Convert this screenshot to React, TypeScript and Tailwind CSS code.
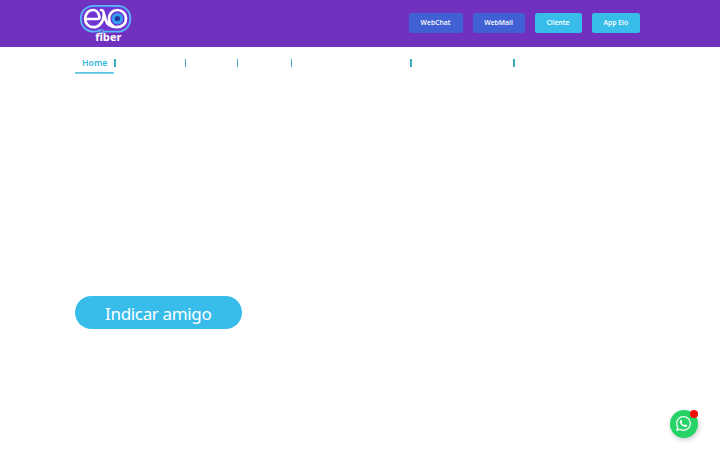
import React from "react";

const actions = [
  { label: "WebChat", style: "w-[54px] bg-[#4060d3]" },
  { label: "WebMail", style: "w-[52px] bg-[#4060d3]" },
  { label: "Cliente", style: "w-[47px] bg-[#38bdea]" },
  { label: "App Elo", style: "w-[48.5px] bg-[#38bdea]" },
];

const menuItems = ["w-[69.5px]", "w-[50.5px]", "w-[53px]", "w-[118px]", "w-[101.5px]"];

function Separator() {
  return <div className="mt-[6.5px] h-[8px] w-[1.3px] shrink-0 bg-[#3fa9c4]" />;
}

function Logo() {
  return (
    <svg className="h-[42px] w-[54px]" viewBox="79 3 54 42" fill="none" role="img">
      <g strokeLinecap="round" strokeLinejoin="round">
        <path
          d="M99.5 30.2C97.9 31.2 96 31.7 94 31.7C86.2 31.7 80.8 26.2 80.8 18.7C80.8 11.2 86.2 5.8 94 5.8H117.3C125 5.8 130.3 11.2 130.3 18.7C130.3 26.2 125 31.7 117.3 31.7H103.5"
          fill="#7035d1"
          stroke="#55b8fa"
          strokeWidth="1.8"
        />
        <path
          d="M86 19H97.5C99.3 19 99.8 17.7 99.3 16.1C98.3 12.2 96 10 93 10C88.3 10 85.2 13.8 85.2 18.8C85.2 23.7 88.8 27.2 93.5 27.2C99.5 27.2 103.8 21 103.8 14.7C103.8 11.6 102.8 10 101 10M101 10C104 10 104.3 15 105.5 19.4C107 25 111 27.2 117 27.2C122.3 27.2 126 23.6 126 18.7C126 13.6 122.3 10 117.3 10C112.5 10 109 13.8 109 18.6C109 22 111 25.2 114 26.6"
          stroke="white"
          strokeWidth="2.7"
        />
        <circle cx="117.4" cy="18.6" r="4.2" fill="#223c9a" stroke="#349cf2" strokeWidth="3" />
        <circle cx="101.5" cy="31.4" r="1.7" fill="#6930bf" stroke="#68cbff" strokeWidth="1.1" />
      </g>
      <text x="95.2" y="41.3" fill="white" fontFamily="Open Sans, sans-serif" fontSize="10.3" fontWeight="700" textLength="26.3" lengthAdjust="spacingAndGlyphs">fiber</text>
    </svg>
  );
}

export default function App() {
  return (
    <div className="h-[450px] w-[720px] overflow-hidden bg-white font-['Open_Sans',sans-serif]">
      <header className="flex h-[46.5px] items-start bg-[#6f31be] pt-[3px] pr-20 pl-[79px]">
        <a href="#" className="block"><Logo /></a>
        <div className="mt-[10.3px] ml-auto flex gap-[10px]">
          {actions.map(({ label, style }) => (
            <button key={label} className={`${style} h-[19.7px] rounded-[2.5px] text-[6.8px] leading-[20px] font-semibold text-white`}>
              <span className="block h-full">{label}</span>
            </button>
          ))}
        </div>
      </header>
      <nav className="flex h-7 pt-[5.5px] pl-[75px]">
        <div className="flex h-[22px] w-[39.3px] flex-col font-['Noto_Sans',sans-serif] text-[8.7px] leading-[22px] font-semibold text-[#36b7e0]">
          <span className="h-[20.2px] text-center">Home</span>
          <svg className="h-[2px] w-full" viewBox="0 0 39.3 2" preserveAspectRatio="none">
            <rect y="0.2" width="39.3" height="1.6" fill="#38b9dc" />
          </svg>
        </div>
        <Separator />
        {menuItems.map((width, index) => (
          <div key={index} className="flex">
            <div className={width} />
            <Separator />
          </div>
        ))}
      </nav>
      <main className="pt-[221.5px] pl-[75px]">
        <button className="h-[33px] w-[166.5px] rounded-full bg-[#38bdea] text-[17px] leading-[34px] text-white">
          <span className="block pt-px font-['Noto_Sans',sans-serif] tracking-[-0.35px]">Indicar amigo</span>
        </button>
      </main>
      <button aria-label="WhatsApp" className="fixed right-[22.5px] bottom-[12.5px] flex h-[28px] w-[28px] items-center justify-center rounded-full bg-[#25d366] shadow-[1px_2px_5px_rgba(0,0,0,0.2)]">
        <svg className="h-[17px] w-[17px]" viewBox="0 0 448 512" fill="white">
          <path d="M380.9 97.1C339 55.1 283.2 32 223.9 32c-122.4 0-222 99.6-222 222 0 39.1 10.2 77.3 29.6 111L0 480l117.7-30.9c32.4 17.7 68.9 27 106.1 27h.1c122.3 0 224.1-99.6 224.1-222 0-59.3-25.2-115-67.1-157zm-157 341.6c-33.2 0-65.7-8.9-94-25.7l-6.7-4-69.8 18.3L72 359.2l-4.4-7c-18.5-29.4-28.2-63.3-28.2-98.2 0-101.7 82.8-184.5 184.6-184.5 49.3 0 95.6 19.2 130.4 54.1 34.8 34.9 56.2 81.2 56.1 130.5 0 101.8-84.9 184.6-186.6 184.6zm101.2-138.2c-5.5-2.8-32.8-16.2-37.9-18-5.1-1.9-8.8-2.8-12.5 2.8-3.7 5.6-14.3 18-17.6 21.8-3.2 3.7-6.5 4.2-12 1.4-32.6-16.3-54-29.1-75.5-66-5.7-9.8 5.7-9.1 16.3-30.3 1.8-3.7.9-6.9-.5-9.7-1.4-2.8-12.5-30.1-17.1-41.2-4.5-10.8-9.1-9.3-12.5-9.5-3.2-.2-6.9-.2-10.6-.2-3.7 0-9.7 1.4-14.8 6.9-5.1 5.6-19.4 19-19.4 46.3 0 27.3 19.9 53.7 22.6 57.4 2.8 3.7 39.1 59.7 94.8 83.8 35.2 15.2 49 16.5 66.6 13.9 10.7-1.6 32.8-13.4 37.4-26.4 4.6-13 4.6-24.1 3.2-26.4-1.3-2.5-5-3.9-10.5-6.6z" />
        </svg>
        <span className="absolute top-0 right-0 h-2 w-2 rounded-full bg-[#f80808]" />
      </button>
    </div>
  );
}
